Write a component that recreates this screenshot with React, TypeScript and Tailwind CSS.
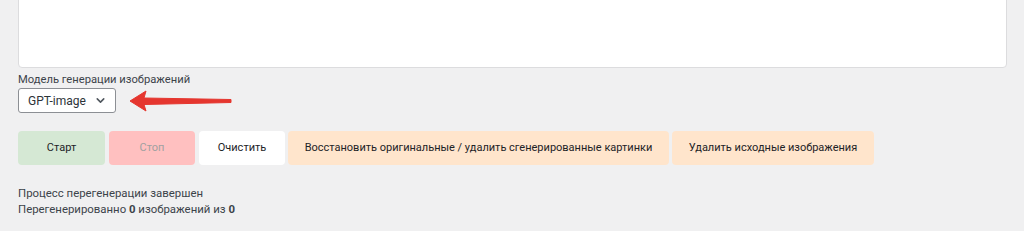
export default function App() {
  const font = { fontFamily: 'Roboto, "Noto Sans", sans-serif' };
  return (
    <div className="h-[231px] w-[1024px] overflow-hidden whitespace-nowrap bg-[#f0f0f1] text-[#3c434a]" style={font}>
      <div className="ml-[18px] -mt-[40px] h-[108px] w-[989px] rounded-[4px] border border-[#dcdcde] bg-white" />

      <div className="ml-[18px] mt-[4px] text-[11.2px] leading-[16px]">Модель генерации изображений</div>
      <div className="ml-[18px] flex items-center">
        <div className="flex h-[25px] w-[98px] items-center justify-between rounded-[3px] border border-[#8c8f94] bg-white pl-[9px] pr-[8px] text-[12px] text-[#2c3338]">
          <span>GPT-image</span>
          <svg width="13" height="13" viewBox="0 0 20 20" fill="none">
            <path d="M5 7.5l5 5 5-5" stroke="#50575e" strokeWidth="2.4" strokeLinecap="round" strokeLinejoin="round" />
          </svg>
        </div>
        <svg width="104" height="24" viewBox="0 0 104 24" className="ml-[14px]">
          <path d="M0 12 L16 2 L14 9 L101 10.5 L101 13.5 L14 15.5 L16 22 Z" fill="#e5362f" stroke="#e5362f" strokeWidth="1" strokeLinejoin="round" />
        </svg>
      </div>

      <div className="ml-[18px] mt-[18px] flex gap-[3px] text-[11px]">
        <button className="h-[34px] w-[87px] rounded-[4px] bg-[#d5e8d4] text-[#1d2327]">Старт</button>
        <button className="ml-[1px] h-[34px] w-[86px] rounded-[4px] bg-[#ffc0c0] text-[#a0a0a0]">Стоп</button>
        <button className="ml-[1px] h-[34px] w-[86px] rounded-[4px] bg-white text-[#1d2327]">Очистить</button>
        <button className="h-[34px] w-[381px] rounded-[4px] bg-[#ffe5cc] text-[#1d2327]">
          Восстановить оригинальные / удалить сгенерированные картинки
        </button>
        <button className="h-[34px] w-[202px] rounded-[4px] bg-[#ffe5cc] text-[#1d2327]">Удалить исходные изображения</button>
      </div>

      <div className="ml-[18px] mt-[20px] text-[11.4px] leading-[16px]">
        <div>Процесс перегенерации завершен</div>
        <div>
          Перегенерированно <b className="font-bold">0</b> изображений из <b className="font-bold">0</b>
        </div>
      </div>
    </div>
  );
}
